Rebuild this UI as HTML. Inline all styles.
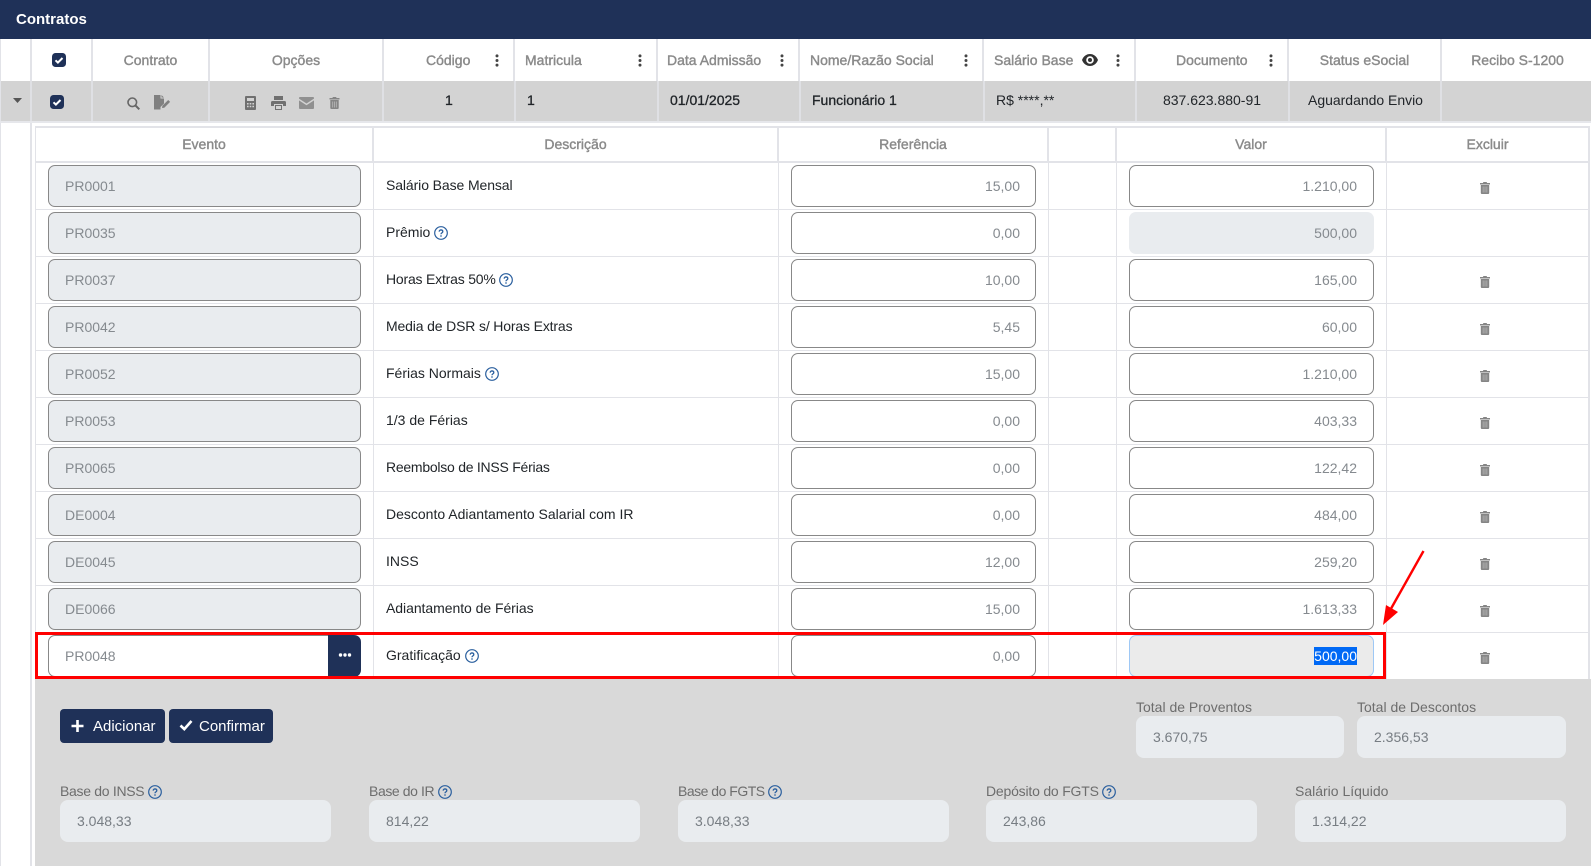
<!DOCTYPE html>
<html lang="pt-BR"><head><meta charset="utf-8"><title>Contratos</title>
<style>
*{box-sizing:border-box}
html,body{margin:0;padding:0;width:1591px;height:866px;overflow:hidden;background:#fff;font-family:"Liberation Sans",sans-serif;font-size:14px;color:#212529}
.a{position:absolute}
.bar{left:0;top:0;width:1591px;height:39px;background:#1f3158;color:#fff;font-weight:bold;font-size:15px;line-height:40px;padding-left:16px}
.hc{position:absolute;top:39px;height:42px;border-right:2px solid #e2e3e8;color:#8a8a8a;font-size:14px;line-height:42px;white-space:nowrap}
.hc,.sh{font-weight:normal;-webkit-text-stroke:.4px #8a8a8a}
.ctr{text-align:center}
.drow{left:1px;top:81px;width:1590px;height:40px;background:#d3d3d3}
.dl{position:absolute;top:81px;width:2px;height:40px;background:#dfe0e4}
.dt{position:absolute;top:82px;line-height:37px;height:39px;font-size:14px;color:#212529;white-space:nowrap}
.m{-webkit-text-stroke:.3px #212529}
.hline{left:0;top:121px;width:1591px;height:2px;background:#e6e7eb}
.sh{position:absolute;top:128px;height:34px;line-height:32px;text-align:center;color:#8a8a8a;font-size:14px;border-right:2px solid #e2e3e8}
.row{position:absolute;left:36px;width:1552px;height:48px;border-bottom:1px solid #e2e3e8}
.v{position:absolute;top:0;width:1px;height:48px;background:#e2e3e8}
.i{position:absolute;top:3px;height:42px;border:1px solid #888;border-radius:7px;font-size:14px;line-height:40px;color:#858a8f;white-space:nowrap}
.ev{left:12px;width:313px;background:#e9ecef;padding-left:16px}
.rf{left:755px;width:245px;text-align:right;padding-right:15px;background:#fff}
.vl{left:1093px;width:245px;text-align:right;padding-right:16px;background:#fff}
.d{position:absolute;left:350px;top:0;line-height:46px;font-size:14px;color:#212529;white-space:nowrap}
.d svg{vertical-align:-3px;margin-left:0}
.t{position:absolute;left:1444px;top:20px}
.panel{left:35px;top:679px;width:1556px;height:187px;background:#d9d9d9}
.btn{position:absolute;top:709px;height:34px;background:#1f3158;color:#fff;border-radius:4px;font-size:15px;line-height:36px;white-space:nowrap}
.lb{position:absolute;font-size:14px;line-height:16px;color:#6d6d6d;white-space:nowrap}
.lb svg{vertical-align:-3px;margin-left:0}
.f{position:absolute;height:42px;background:#e9ecef;border-radius:8px;font-size:14px;line-height:42px;color:#777d83;padding-left:17px}
</style></head><body>
<svg width="0" height="0" style="position:absolute">
<symbol id="tr" viewBox="0 0 10 12"><path fill="#858585" d="M3.400 0h3.200l.5 1H10v1.500H0V1h2.900zM.8 3h8.400v8a1 1 0 0 1-1 1H1.800a1 1 0 0 1-1-1z"/><path fill="#b3b3b3" d="M2.700 4.500h.9v6h-.9zM4.550 4.500h.9v6h-.9zM6.400 4.500h.9v6h-.9z"/></symbol>
<symbol id="hp" viewBox="0 0 14 14"><circle cx="7" cy="7" r="6.300" fill="none" stroke="#2a5f9e" stroke-width="1.200"/><path fill="none" stroke="#2a5f9e" stroke-width="1.300" d="M5.200 5.600c0-2.200 3.600-2.200 3.600 0 0 1.300-1.800 1.300-1.800 2.600"/><rect x="6.300" y="9.300" width="1.400" height="1.400" fill="#2a5f9e"/></symbol>
<symbol id="dv" viewBox="0 0 4 14"><circle cx="2" cy="2" r="1.600" fill="#444"/><circle cx="2" cy="7" r="1.600" fill="#444"/><circle cx="2" cy="12" r="1.600" fill="#444"/></symbol>
<symbol id="ck" viewBox="0 0 14 14"><rect width="14" height="14" rx="3.500" fill="#1f3158"/><path d="M3.500 7.300l2.400 2.300 4.600-4.600" fill="none" stroke="#fff" stroke-width="2"/></symbol>
</svg>

<div class="a bar">Contratos</div>

<div class="a" style="left:0;top:39px;width:1px;height:827px;background:#e2e3e8"></div>
<div class="hc" style="left:1px;width:31px"></div>
<div class="hc" style="left:32px;width:61px"></div>
<svg class="a" style="left:52px;top:53px" width="14" height="14"><use href="#ck"/></svg>
<div class="hc ctr" style="left:93px;width:117px">Contrato</div>
<div class="hc ctr" style="left:210px;width:174px">Opções</div>
<div class="hc" style="left:384px;width:131px;padding-left:42px">Código</div>
<svg class="a" style="left:495px;top:54px" width="4" height="13"><use href="#dv"/></svg>
<div class="hc" style="left:515px;width:143px;padding-left:10px">Matricula</div>
<svg class="a" style="left:638px;top:54px" width="4" height="13"><use href="#dv"/></svg>
<div class="hc" style="left:658px;width:142px;padding-left:9px">Data Admissão</div>
<svg class="a" style="left:780px;top:54px" width="4" height="13"><use href="#dv"/></svg>
<div class="hc" style="left:800px;width:184px;padding-left:10px">Nome/Razão Social</div>
<svg class="a" style="left:964px;top:54px" width="4" height="13"><use href="#dv"/></svg>
<div class="hc" style="left:984px;width:152px;padding-left:10px">Salário Base</div>
<svg class="a" style="left:1082px;top:54px" width="16" height="12" viewBox="0 0 16 12"><path fill="#333" fill-rule="evenodd" d="M8 0c3.600 0 6.600 2.400 8 6-1.400 3.600-4.400 6-8 6S1.400 9.600 0 6c1.400-3.600 4.400-6 8-6zm0 2.200a3.800 3.800 0 1 0 0 7.600 3.800 3.800 0 0 0 0-7.600z"/><circle cx="8" cy="6" r="2" fill="#333"/></svg>
<svg class="a" style="left:1116px;top:54px" width="4" height="13"><use href="#dv"/></svg>
<div class="hc" style="left:1136px;width:153px;padding-left:40px">Documento</div>
<svg class="a" style="left:1269px;top:54px" width="4" height="13"><use href="#dv"/></svg>
<div class="hc ctr" style="left:1289px;width:153px">Status eSocial</div>
<div class="hc ctr" style="left:1442px;width:149px;border-right:0;padding-left:2px">Recibo S-1200</div>

<div class="a drow"></div>
<div class="dl" style="left:30px"></div><div class="dl" style="left:91px"></div><div class="dl" style="left:208px"></div><div class="dl" style="left:382px"></div><div class="dl" style="left:514px"></div><div class="dl" style="left:657px"></div><div class="dl" style="left:799px"></div><div class="dl" style="left:983px"></div><div class="dl" style="left:1135px"></div><div class="dl" style="left:1288px"></div><div class="dl" style="left:1440px"></div>
<svg class="a" style="left:13px;top:98px" width="9" height="5"><path d="M0 0h9L4.500 5z" fill="#555"/></svg>
<svg class="a" style="left:50px;top:95px" width="14" height="14"><use href="#ck"/></svg>
<svg class="a" style="left:127px;top:97px" width="13" height="13" viewBox="0 0 13 13"><circle cx="5.300" cy="5.300" r="4.300" fill="none" stroke="#666" stroke-width="1.600"/><path d="M8.500 8.500l3.800 3.800" stroke="#666" stroke-width="2"/></svg>
<svg class="a" style="left:154px;top:95px" width="17" height="15" viewBox="0 0 17 15"><path fill="#808080" d="M0 0h6.500v3.500H10v5L6.500 12v2.500H0zM7.500 0L10 2.500H7.500z"/><path fill="#808080" d="M8 13l.4-2.200 5.800-5.800 1.900 1.900-5.800 5.800z"/></svg>
<svg class="a" style="left:245px;top:96px" width="11" height="14" viewBox="0 0 11 14"><path fill="#707070" fill-rule="evenodd" d="M1 0h9a1 1 0 0 1 1 1v12a1 1 0 0 1-1 1H1a1 1 0 0 1-1-1V1a1 1 0 0 1 1-1zm1 2v3h7V2zm0 5v1.500h1.600V7zm2.700 0v1.500h1.600V7zm2.700 0v1.500H9V7zM2 9.700v1.500h1.600V9.700zm2.700 0v1.500h1.600V9.700zm2.700 0v1.500H9V9.700z"/></svg>
<svg class="a" style="left:271px;top:96px" width="15" height="14" viewBox="0 0 15 14"><path fill="#707070" fill-rule="evenodd" d="M3 0h9v4H3zM1.500 5h12A1.500 1.500 0 0 1 15 6.500V10h-3V8H3v2H0V6.500A1.500 1.500 0 0 1 1.500 5zM4 9h7v5H4z"/><path fill="#d3d3d3" d="M5 10h5v3H5z"/></svg>
<svg class="a" style="left:299px;top:97px" width="15" height="12" viewBox="0 0 15 12"><path fill="#909090" d="M0 1a1 1 0 0 1 1-1h13a1 1 0 0 1 1 1v.6L7.500 6.500 0 1.600zM0 3.400l7.500 4.900L15 3.400V11a1 1 0 0 1-1 1H1a1 1 0 0 1-1-1z"/></svg>
<svg class="a" style="left:329px;top:97px" width="11" height="12"><use href="#tr"/></svg>
<div class="dt m" style="left:445px">1</div>
<div class="dt m" style="left:527px">1</div>
<div class="dt m" style="left:670px">01/01/2025</div>
<div class="dt m" style="left:812px">Funcionário 1</div>
<div class="dt" style="left:996px">R$ ****,**</div>
<div class="dt" style="left:1136px;width:152px;text-align:center">837.623.880-91</div>
<div class="dt" style="left:1290px;width:151px;text-align:center;letter-spacing:-.02px">Aguardando Envio</div>
<div class="a hline"></div>

<div class="a" style="left:30px;top:123px;width:2px;height:743px;background:#e2e3e8"></div>
<div class="a" style="left:35px;top:126px;width:1553px;height:2px;background:#e2e3e8"></div>
<div class="a" style="left:35px;top:128px;width:1px;height:551px;background:#e2e3e8"></div>
<div class="a" style="left:1588px;top:126px;width:2px;height:553px;background:#e2e3e8"></div>
<div class="sh" style="left:36px;width:338px">Evento</div>
<div class="sh" style="left:374px;width:405px">Descrição</div>
<div class="sh" style="left:779px;width:270px">Referência</div>
<div class="sh" style="left:1049px;width:68px"></div>
<div class="sh" style="left:1117px;width:270px">Valor</div>
<div class="sh" style="left:1387px;width:201px;border-right:0">Excluir</div>
<div class="a" style="left:36px;top:161px;width:1552px;height:2px;background:#e2e3e8"></div>

<div class="row" style="top:162px"><div class="v" style="left:337px"></div><div class="v" style="left:742px"></div><div class="v" style="left:1012px"></div><div class="v" style="left:1080px"></div><div class="v" style="left:1350px"></div>
<div class="i ev">PR0001</div><div class="d" style="letter-spacing:-.1px">Salário Base Mensal</div><div class="i rf">15,00</div><div class="i vl">1.210,00</div><svg class="t" width="10" height="12"><use href="#tr"/></svg></div>

<div class="row" style="top:209px"><div class="v" style="left:337px"></div><div class="v" style="left:742px"></div><div class="v" style="left:1012px"></div><div class="v" style="left:1080px"></div><div class="v" style="left:1350px"></div>
<div class="i ev">PR0035</div><div class="d">Prêmio <svg width="14" height="14"><use href="#hp"/></svg></div><div class="i rf">0,00</div><div class="i vl" style="background:#e9ecef;border:0;line-height:42px;padding-right:17px">500,00</div></div>

<div class="row" style="top:256px"><div class="v" style="left:337px"></div><div class="v" style="left:742px"></div><div class="v" style="left:1012px"></div><div class="v" style="left:1080px"></div><div class="v" style="left:1350px"></div>
<div class="i ev">PR0037</div><div class="d" style="letter-spacing:-.2px">Horas Extras 50% <svg width="14" height="14"><use href="#hp"/></svg></div><div class="i rf">10,00</div><div class="i vl">165,00</div><svg class="t" width="10" height="12"><use href="#tr"/></svg></div>

<div class="row" style="top:303px"><div class="v" style="left:337px"></div><div class="v" style="left:742px"></div><div class="v" style="left:1012px"></div><div class="v" style="left:1080px"></div><div class="v" style="left:1350px"></div>
<div class="i ev">PR0042</div><div class="d" style="letter-spacing:-.15px">Media de DSR s/ Horas Extras</div><div class="i rf">5,45</div><div class="i vl">60,00</div><svg class="t" width="10" height="12"><use href="#tr"/></svg></div>

<div class="row" style="top:350px"><div class="v" style="left:337px"></div><div class="v" style="left:742px"></div><div class="v" style="left:1012px"></div><div class="v" style="left:1080px"></div><div class="v" style="left:1350px"></div>
<div class="i ev">PR0052</div><div class="d">Férias Normais <svg width="14" height="14"><use href="#hp"/></svg></div><div class="i rf">15,00</div><div class="i vl">1.210,00</div><svg class="t" width="10" height="12"><use href="#tr"/></svg></div>

<div class="row" style="top:397px"><div class="v" style="left:337px"></div><div class="v" style="left:742px"></div><div class="v" style="left:1012px"></div><div class="v" style="left:1080px"></div><div class="v" style="left:1350px"></div>
<div class="i ev">PR0053</div><div class="d">1/3 de Férias</div><div class="i rf">0,00</div><div class="i vl">403,33</div><svg class="t" width="10" height="12"><use href="#tr"/></svg></div>

<div class="row" style="top:444px"><div class="v" style="left:337px"></div><div class="v" style="left:742px"></div><div class="v" style="left:1012px"></div><div class="v" style="left:1080px"></div><div class="v" style="left:1350px"></div>
<div class="i ev">PR0065</div><div class="d" style="letter-spacing:-.25px">Reembolso de INSS Férias</div><div class="i rf">0,00</div><div class="i vl">122,42</div><svg class="t" width="10" height="12"><use href="#tr"/></svg></div>

<div class="row" style="top:491px"><div class="v" style="left:337px"></div><div class="v" style="left:742px"></div><div class="v" style="left:1012px"></div><div class="v" style="left:1080px"></div><div class="v" style="left:1350px"></div>
<div class="i ev">DE0004</div><div class="d">Desconto Adiantamento Salarial com IR</div><div class="i rf">0,00</div><div class="i vl">484,00</div><svg class="t" width="10" height="12"><use href="#tr"/></svg></div>

<div class="row" style="top:538px"><div class="v" style="left:337px"></div><div class="v" style="left:742px"></div><div class="v" style="left:1012px"></div><div class="v" style="left:1080px"></div><div class="v" style="left:1350px"></div>
<div class="i ev">DE0045</div><div class="d">INSS</div><div class="i rf">12,00</div><div class="i vl">259,20</div><svg class="t" width="10" height="12"><use href="#tr"/></svg></div>

<div class="row" style="top:585px"><div class="v" style="left:337px"></div><div class="v" style="left:742px"></div><div class="v" style="left:1012px"></div><div class="v" style="left:1080px"></div><div class="v" style="left:1350px"></div>
<div class="i ev">DE0066</div><div class="d" style="letter-spacing:-.05px">Adiantamento de Férias</div><div class="i rf">15,00</div><div class="i vl">1.613,33</div><svg class="t" width="10" height="12"><use href="#tr"/></svg></div>

<div class="row" style="top:632px;border-bottom:0"><div class="v" style="left:337px"></div><div class="v" style="left:742px"></div><div class="v" style="left:1012px"></div><div class="v" style="left:1080px"></div><div class="v" style="left:1350px"></div>
<div class="i ev" style="background:#fff;width:281px;border-radius:7px 0 0 7px;border-right:0">PR0048</div>
<div class="a" style="left:292px;top:3px;width:33px;height:42px;background:#1f3158;border-radius:0 7px 7px 0"></div>
<svg class="a" style="left:302px;top:21px" width="14" height="4"><circle cx="2.500" cy="2" r="1.700" fill="#fff"/><circle cx="7" cy="2" r="1.700" fill="#fff"/><circle cx="11.500" cy="2" r="1.700" fill="#fff"/></svg>
<div class="d">Gratificação <svg width="14" height="14"><use href="#hp"/></svg></div><div class="i rf">0,00</div>
<div class="i vl" style="background:#ebebeb;border-color:#9ec8f5"><span style="background:#0069f5;color:#fff;padding:1px 0">500,00</span></div>
<svg class="t" width="10" height="12"><use href="#tr"/></svg></div>

<div class="a panel"></div>
<div class="btn" style="left:60px;width:105px"><svg class="a" style="left:11px;top:10px" width="13" height="14"><path d="M6.500 1v12M.5 7h12" stroke="#fff" stroke-width="2.600"/></svg><span class="a" style="left:33px">Adicionar</span></div>
<div class="btn" style="left:169px;width:104px"><svg class="a" style="left:10px;top:10px" width="14" height="12"><path d="M1.500 6.500l3.800 3.600L12.500 2" fill="none" stroke="#fff" stroke-width="2.600"/></svg><span class="a" style="left:30px">Confirmar</span></div>

<div class="lb" style="left:1136px;top:699px">Total de Proventos</div>
<div class="f" style="left:1136px;top:716px;width:208px">3.670,75</div>
<div class="lb" style="left:1357px;top:699px">Total de Descontos</div>
<div class="f" style="left:1357px;top:716px;width:209px">2.356,53</div>

<div class="lb" style="left:60px;top:783px;letter-spacing:-.3px">Base do INSS <svg width="14" height="14"><use href="#hp"/></svg></div>
<div class="f" style="left:60px;top:800px;width:271px">3.048,33</div>
<div class="lb" style="left:369px;top:783px;letter-spacing:-.4px">Base do IR <svg width="14" height="14"><use href="#hp"/></svg></div>
<div class="f" style="left:369px;top:800px;width:271px">814,22</div>
<div class="lb" style="left:678px;top:783px;letter-spacing:-.5px">Base do FGTS <svg width="14" height="14"><use href="#hp"/></svg></div>
<div class="f" style="left:678px;top:800px;width:271px">3.048,33</div>
<div class="lb" style="left:986px;top:783px;letter-spacing:-.2px">Depósito do FGTS <svg width="14" height="14"><use href="#hp"/></svg></div>
<div class="f" style="left:986px;top:800px;width:271px">243,86</div>
<div class="lb" style="left:1295px;top:783px">Salário Líquido</div>
<div class="f" style="left:1295px;top:800px;width:271px">1.314,22</div>

<div class="a" style="left:35px;top:632px;width:1351px;height:47px;border:3px solid #f00"></div>
<svg class="a" style="left:1375px;top:544px" width="55" height="90" viewBox="0 0 55 90"><path d="M48.500 7L13 70" stroke="#f00" stroke-width="2.400" fill="none"/><path d="M8 81L11 61 23 68z" fill="#f00"/></svg>
</body></html>
